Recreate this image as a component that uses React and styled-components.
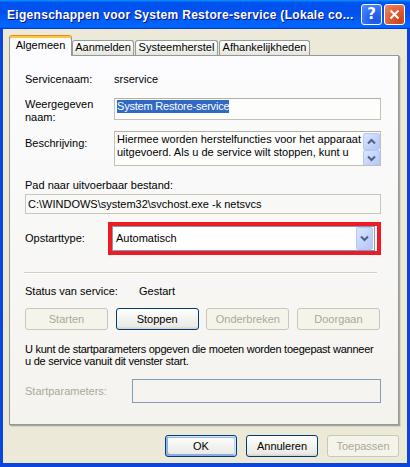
import React from 'react'
import styled, { createGlobalStyle, css } from 'styled-components'

const GlobalStyle = createGlobalStyle`
  html, body {
    margin: 0;
    padding: 0;
    background: #ece9d8;
  }
  body {
    font-family: "Liberation Sans", Arial, sans-serif;
    font-size: 11px;
    color: #000;
  }
`

const Chevron = ({ up }) => (
  <svg width="9" height="7" viewBox="0 0 9 7">
    <path
      d={up ? 'M1 5.5 L4.5 2 L8 5.5' : 'M1 1.5 L4.5 5 L8 1.5'}
      fill="none"
      stroke="#4d6185"
      strokeWidth="2"
    />
  </svg>
)

export default function App() {
  return (
    <>
      <GlobalStyle />
      <Window>
        <TitleBar>
          <Title>Eigenschappen voor System Restore-service (Lokale co...</Title>
          <TitleButtons>
            <HelpButton>?</HelpButton>
            <CloseButton>
              <svg width="11" height="11" viewBox="0 0 11 11">
                <path d="M1.5 1.5 L9.5 9.5 M9.5 1.5 L1.5 9.5" stroke="#fff" strokeWidth="2" />
              </svg>
            </CloseButton>
          </TitleButtons>
        </TitleBar>

        <Client>
          <TabStrip>
            <Tab $w={63} $active>Algemeen</Tab>
            <Tab $w={62}>Aanmelden</Tab>
            <Tab $w={83}>Systeemherstel</Tab>
            <Tab $w={91}>Afhankelijkheden</Tab>
          </TabStrip>

          <Panel>
            <Row>
              <Label $w={89}>Servicenaam:</Label>
              <span>srservice</span>
            </Row>

            <Row $mt={12}>
              <Label $w={89}>
                Weergegeven
                <br />
                naam:
              </Label>
              <Field $h={22}>
                <Selected>System Restore-service</Selected>
              </Field>
            </Row>

            <Row $mt={7}>
              <Label $w={89} $pt={6}>Beschrijving:</Label>
              <Field $h={35} $multi>
                <MultiText>
                  Hiermee worden herstelfuncties voor het apparaat uitgevoerd. Als u de service wilt stoppen, kunt u
                </MultiText>
                <ScrollColumn>
                  <ArrowButton $h={17}>
                    <Chevron up />
                  </ArrowButton>
                  <ArrowButton $h={17}>
                    <Chevron />
                  </ArrowButton>
                </ScrollColumn>
              </Field>
            </Row>

            <Row $mt={13}>Pad naar uitvoerbaar bestand:</Row>
            <Field $block $mt={2} $h={20} $readOnly>
              C:\WINDOWS\system32\svchost.exe -k netsvcs
            </Field>

            <Row $mt={8} $center>
              <Label $w={83}>Opstarttype:</Label>
              <Highlight>
                <Combo>
                  <ComboText>Automatisch</ComboText>
                  <ArrowButton $h={23}>
                    <Chevron />
                  </ArrowButton>
                </Combo>
              </Highlight>
            </Row>

            <Separator />

            <Row $mt={11}>
              <Label $w={114}>Status van service:</Label>
              <span>Gestart</span>
            </Row>

            <ServiceButtons>
              <Button $w={83} disabled>Starten</Button>
              <Button $w={83}>Stoppen</Button>
              <Button $w={83} disabled>Onderbreken</Button>
              <Button $w={83} disabled>Doorgaan</Button>
            </ServiceButtons>

            <Note>
              U kunt de startparameters opgeven die moeten worden toegepast wanneer
              <br />
              u de service vanuit dit venster start.
            </Note>

            <Row $mt={12} $center>
              <Label $w={107} $disabled>Startparameters:</Label>
              <Field $h={24} $disabled />
            </Row>
          </Panel>

          <Footer>
            <Button $w={72} $default>OK</Button>
            <Button $w={72}>Annuleren</Button>
            <Button $w={72} disabled>Toepassen</Button>
          </Footer>
        </Client>
      </Window>
    </>
  )
}

const Window = styled.div`
  width: 410px;
  height: 467px;
  box-sizing: border-box;
  display: flex;
  flex-direction: column;
  background: #0a45dc;
`

const TitleBar = styled.div`
  height: 29px;
  flex-shrink: 0;
  box-sizing: border-box;
  display: flex;
  align-items: center;
  justify-content: space-between;
  gap: 4px;
  padding: 0 5px 0 7px;
  background: linear-gradient(
    180deg,
    #0997ff,
    #0053ee 8%,
    #0050ee 40%,
    #06f 88%,
    #06f 93%,
    #005bff 95%,
    #003dd7 96%,
    #003dd7
  );
`

const Title = styled.div`
  font-family: "Liberation Sans", Arial, sans-serif;
  font-weight: bold;
  font-size: 12px;
  letter-spacing: 0.3px;
  color: #fff;
  text-shadow: 1px 1px #0f1089;
  white-space: nowrap;
`

const TitleButtons = styled.div`
  display: flex;
  flex-shrink: 0;
  gap: 2px;
  margin-top: -1px;
`

const titleButton = css`
  box-sizing: border-box;
  width: 21px;
  height: 21px;
  border: 1px solid #fff;
  border-radius: 3px;
  display: flex;
  align-items: center;
  justify-content: center;
`

const HelpButton = styled.div`
  ${titleButton};
  background: radial-gradient(circle at 70% 80%, #1c56e8 0%, #2a66f0 40%, #4c86ff 90%);
  color: #fff;
  font-family: "DejaVu Sans", sans-serif;
  font-weight: bold;
  font-size: 15px;
  line-height: 1;
`

const CloseButton = styled.div`
  ${titleButton};
  background: radial-gradient(circle at 80% 85%, #cc4616 0%, #dd5a32 45%, #f08a6a 100%);
`

const Client = styled.div`
  flex: 1;
  margin: 0 3px 4px;
  box-sizing: border-box;
  background: #ece9d8;
  padding: 6px 8px 6px 6px;
  display: flex;
  flex-direction: column;
`

const TabStrip = styled.div`
  display: flex;
  align-items: flex-end;
  height: 20px;
`

const Tab = styled.div`
  box-sizing: border-box;
  width: ${p => p.$w}px;
  text-align: center;
  line-height: 13px;
  border: 1px solid #919b9c;
  border-bottom: none;
  border-radius: 3px 3px 0 0;
  position: relative;
  ${p =>
    p.$active
      ? css`
          height: 21px;
          margin-bottom: -1px;
          z-index: 1;
          padding-top: 3px;
          border-top: 1px solid #e68b2c;
          box-shadow: inset 0 2px 0 #ffc73c;
          background: #fcfcfe;
        `
      : css`
          height: 15px;
          margin-right: 1px;
          background: linear-gradient(180deg, #ffffff, #f3f2ee 60%, #e6e4da);
        `}
`

const Panel = styled.div`
  box-sizing: border-box;
  height: 370px;
  border: 1px solid #919b9c;
  background: linear-gradient(180deg, #fcfcfe, #f4f3ee);
  box-shadow: 1px 1px 0 #aca899, 2px 2px 0 #d6d3c2;
  padding: 17px 17px 0 15px;
  display: flex;
  flex-direction: column;
`

const Row = styled.div`
  display: flex;
  align-items: ${p => (p.$center ? 'center' : 'flex-start')};
  margin-top: ${p => p.$mt || 0}px;
  line-height: 13px;
`

const Label = styled.div`
  flex-shrink: 0;
  width: ${p => p.$w}px;
  padding-top: ${p => p.$pt || 0}px;
  line-height: 13px;
  color: ${p => (p.$disabled ? '#aca899' : '#000')};
`

const Field = styled.div`
  box-sizing: border-box;
  flex: ${p => (p.$block ? 'none' : 1)};
  height: ${p => p.$h}px;
  margin-top: ${p => p.$mt || 0}px;
  display: flex;
  align-items: ${p => (p.$multi ? 'stretch' : 'center')};
  padding: ${p => (p.$multi ? '0 0 0 2px' : '0 2px')};
  line-height: 13px;
  white-space: nowrap;
  overflow: hidden;
  ${p =>
    p.$readOnly
      ? css`
          border: 1px solid #c9c7ba;
          background: transparent;
        `
      : p.$disabled
      ? css`
          border: 1px solid #7f9db9;
          background: transparent;
        `
      : css`
          border: 1px solid #c3c1b5;
          border-top-color: #b3b1a5;
          background: #fdfdfb;
        `}
`

const Selected = styled.span`
  background: #316ac5;
  color: #fff;
  margin-top: -6px;
  letter-spacing: -0.2px;
`

const MultiText = styled.div`
  flex: 1;
  white-space: normal;
  padding-top: 1px;
  line-height: 13px;
`

const ScrollColumn = styled.div`
  display: flex;
  flex-direction: column;
  padding: 1px 0;
  width: 17px;
`

const ArrowButton = styled.div`
  box-sizing: border-box;
  width: 17px;
  height: ${p => p.$h}px;
  flex-shrink: 0;
  display: flex;
  align-items: center;
  justify-content: center;
  border: 1px solid #b4c8f4;
  border-radius: 2px;
  background: linear-gradient(135deg, #dbe6ff, #c3d4fb 55%, #b3c7f4);
`

const Highlight = styled.div`
  box-sizing: border-box;
  flex: 1;
  border: 4px solid #ed1c24;
  padding-right: 2px;
`

const Combo = styled.div`
  box-sizing: border-box;
  height: 25px;
  border: 1px solid #7f9db9;
  background: #fff;
  display: flex;
  align-items: center;
  padding: 0 1px 0 3px;
`

const ComboText = styled.div`
  flex: 1;
  line-height: 13px;
`

const Separator = styled.div`
  margin: 17px 4px 0 -1px;
  border-top: 1px solid #d0d0bf;
  border-bottom: 1px solid #fff;
`

const ServiceButtons = styled.div`
  display: flex;
  justify-content: space-between;
  margin-top: 10px;
  padding-right: 1px;
`

const Button = styled.button`
  box-sizing: border-box;
  width: ${p => p.$w}px;
  height: 22px;
  padding: 0;
  font-family: "Liberation Sans", Arial, sans-serif;
  font-size: 11px;
  color: #000;
  border: 1px solid #003c74;
  border-radius: 3px;
  background: linear-gradient(180deg, #fff, #f2f2ee 50%, #ecebe6 86%, #d6d0c5);
  ${p =>
    p.$default &&
    css`
      box-shadow: inset -1px 1px #cee7ff, inset 1px 2px #98b8ea, inset -2px 2px #bcd4f6,
        inset 1px -1px #89ade4, inset 2px -2px #89ade4;
    `}
  &:disabled {
    color: #aca899;
    border-color: #c9c7ba;
    background: #f5f4ea;
  }
`

const Note = styled.div`
  margin-top: 13px;
  line-height: 12px;
  letter-spacing: -0.25px;
  white-space: nowrap;
`

const Footer = styled.div`
  display: flex;
  justify-content: flex-end;
  gap: 9px;
  margin-top: 10px;
`
